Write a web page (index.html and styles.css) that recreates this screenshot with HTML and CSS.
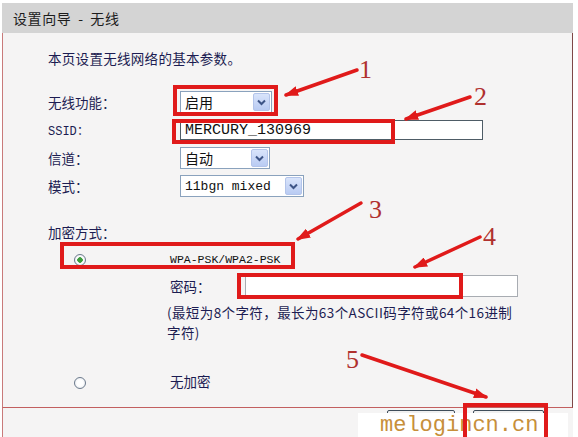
FILE: index.html
```html
<!DOCTYPE html>
<html lang="zh-CN">
<head>
    <meta charset="UTF-8">
    <title>设置向导 - 无线</title>
    <link rel="stylesheet" href="styles.css">
</head>
<body>
    <div class="wizard">
        <div class="wizard-head">设置向导 - 无线</div>

        <div class="wizard-body">
            <p class="intro">本页设置无线网络的基本参数。</p>

            <!-- BASIC SETTINGS -->
            <div class="form-grid">
                <label>无线功能：</label>
                <div class="select sel-switch"><span>启用</span><span class="arrow"><svg width="9" height="7" viewBox="0 0 9 7"><path d="M1 1.5 L4.5 5 L8 1.5" fill="none" stroke="#3d5486" stroke-width="2"/></svg></span></div>

                <label class="mono">SSID：</label>
                <input type="text" class="ssid" value="MERCURY_130969">

                <label>信道：</label>
                <div class="select sel-channel"><span>自动</span><span class="arrow"><svg width="9" height="7" viewBox="0 0 9 7"><path d="M1 1.5 L4.5 5 L8 1.5" fill="none" stroke="#3d5486" stroke-width="2"/></svg></span></div>

                <label>模式：</label>
                <div class="select sel-mode"><span class="mono-val">11bgn mixed</span><span class="arrow"><svg width="9" height="7" viewBox="0 0 9 7"><path d="M1 1.5 L4.5 5 L8 1.5" fill="none" stroke="#3d5486" stroke-width="2"/></svg></span></div>
            </div>

            <!-- ENCRYPTION -->
            <div class="enc-title">加密方式：</div>

            <div class="enc-option">
                <span class="radio-cell"><span class="radio checked"></span></span>
                <span class="enc-name">WPA-PSK/WPA2-PSK</span>
            </div>

            <div class="pwd-row">
                <span class="pwd-label">密码：</span>
                <input type="text" class="pwd">
            </div>
            <p class="note">(最短为8个字符，最长为63个ASCII码字符或64个16进制<br>字符)</p>

            <div class="enc-option enc-none">
                <span class="radio-cell"><span class="radio"></span></span>
                <span>无加密</span>
            </div>
        </div>

        <!-- buttons sit under the watermark, their captions are hidden -->
        <div class="wizard-foot">
            <button type="button" class="btn-prev" aria-label="上一步"></button>
            <button type="button" class="btn-next" aria-label="下一步"></button>
        </div>
    </div>

    <div class="watermark">melogincn.cn</div>

    <!-- annotation marks drawn over the screenshot -->
    <svg class="marks" width="578" height="437" viewBox="0 0 578 437">
        <defs>
            <marker id="head" viewBox="0 0 14 10" refX="12" refY="5" markerWidth="14" markerHeight="10" markerUnits="userSpaceOnUse" orient="auto">
                <path d="M0 0 L14 5 L0 10 Z" fill="#e01a1a"/>
            </marker>
        </defs>
        <g fill="none" stroke="#e01a1a" stroke-width="4">
            <rect x="175" y="87" width="101" height="27"/>
            <rect x="174" y="121" width="219" height="21"/>
            <rect x="62" y="244" width="231" height="23"/>
            <rect x="239" y="275" width="222" height="22"/>
            <rect x="465" y="405" width="81" height="40"/>
        </g>
        <g stroke="#e01a1a" stroke-width="3.5" stroke-linecap="round" marker-end="url(#head)">
            <line x1="357" y1="70" x2="286" y2="95"/>
            <line x1="470" y1="97" x2="406" y2="119"/>
            <line x1="361" y1="203" x2="298" y2="239"/>
            <line x1="480" y1="237" x2="415" y2="267"/>
            <line x1="362" y1="355" x2="486" y2="397"/>
        </g>
        <g class="num">
            <text x="359" y="78">1</text>
            <text x="474" y="105">2</text>
            <text x="369" y="218">3</text>
            <text x="483" y="245">4</text>
            <text x="346" y="368">5</text>
        </g>
    </svg>
</body>
</html>
```

FILE: styles.css
```css
* {
    box-sizing: border-box;
}

body {
    margin: 0;
    position: relative;
    width: 578px;
    height: 437px;
    overflow: hidden;
    background: #ffffff;
    font-family: "Noto Sans CJK SC", sans-serif;
    color: #1c1c52;
}

.wizard {
    margin: 3px 0 0 2px;
    width: 571px;
}

.wizard-head {
    height: 30px;
    line-height: 30px;
    padding-left: 11px;
    background: #d4d4d4;
    font-size: 14px;
    letter-spacing: 0.6px;
    word-spacing: 3px;
    color: #1c1c1c;
}

.wizard-body {
    height: 375px;
    padding: 15px 0 0 45px;
    background: #f5f4f4;
    border-left: 1px solid #c97a7a;
    border-right: 1px solid #7e4848;
    border-bottom: 1px solid #c25f5f;
}

.intro {
    margin: 0;
    font-size: 13.5px;
    letter-spacing: 0.3px;
    line-height: 20px;
}

.form-grid {
    display: grid;
    grid-template-columns: 132px auto;
    grid-auto-rows: 28px;
    align-items: center;
    justify-items: start;
    margin-top: 20px;
    font-size: 13.5px;
}

.form-grid label.mono {
    font-family: "Liberation Mono", monospace;
    font-size: 12px;
}

.select {
    display: flex;
    align-items: center;
    justify-content: space-between;
    height: 22px;
    padding: 0 1px 0 4px;
    background: #ffffff;
    border: 1px solid #8aa2bd;
    font-size: 14px;
    color: #111;
}

.sel-switch { width: 92px; }
.sel-channel { width: 90px; }
.sel-mode { width: 124px; }

.mono-val {
    font-family: "Liberation Mono", monospace;
    font-size: 13px;
}

.arrow {
    display: flex;
    align-items: center;
    justify-content: center;
    width: 17px;
    height: 18px;
    background: linear-gradient(#d9e4fb, #b9cbf3);
    border: 1px solid #b3c4ea;
    border-radius: 2px;
}

input[type="text"] {
    height: 20px;
    padding: 0 4px;
    background: #ffffff;
    outline: none;
    color: #111;
}

.ssid {
    width: 303px;
    border: 1px solid #4e5c66;
    font-family: "Liberation Mono", monospace;
    font-size: 15px;
}

.enc-title {
    margin-top: 22px;
    font-size: 13.5px;
    line-height: 20px;
}

.enc-option {
    display: flex;
    align-items: center;
    height: 22px;
    margin-top: 6px;
    font-size: 13.5px;
}

.radio-cell {
    width: 122px;
    padding-left: 26px;
}

.radio {
    display: block;
    width: 12px;
    height: 12px;
    border-radius: 50%;
    border: 1px solid #6c7a8c;
    background: radial-gradient(circle, #ffffff 40%, #dfe3ea);
}

.radio.checked {
    background: radial-gradient(circle, #3c9c3c 0 2.5px, #ffffff 3px, #dfe3ea);
    margin-top: 2px;
}

.enc-name {
    font-family: "Liberation Mono", monospace;
    font-size: 11.5px;
    color: #111;
}

.pwd-row {
    display: flex;
    align-items: center;
    height: 22px;
    margin-top: 5px;
    padding-left: 122px;
    font-size: 13.5px;
}

.pwd-label {
    width: 75px;
}

.pwd {
    width: 273px;
    height: 22px !important;
    border: 1px solid #a8acb2;
}

.note {
    margin: 5px 0 0 119px;
    font-size: 13.5px;
    letter-spacing: 0.4px;
    line-height: 20px;
    white-space: nowrap;
}

.enc-none {
    margin-top: 28px;
}

.enc-none .radio {
    margin-top: 4px;
}

.wizard-foot {
    display: flex;
    gap: 18px;
    height: 29px;
    padding: 2px 0 0 384px;
    background: #f5f4f4;
    border-left: 1px solid #c97a7a;
}

.wizard-foot button {
    height: 24px;
    padding: 0;
    background: #f0f0f0;
    border: 1px solid #3f4d5a;
    border-radius: 2px;
}

.btn-prev { width: 68px; }
.btn-next { width: 71px; }

.watermark {
    position: absolute;
    left: 358px;
    top: 413px;
    width: 210px;
    height: 26px;
    padding-left: 22px;
    background: #ffffff;
    font-family: "Liberation Mono", monospace;
    font-size: 22px;
    line-height: 25px;
    color: #c78f3a;
}

.marks {
    position: absolute;
    left: 0;
    top: 0;
    pointer-events: none;
}

.num text {
    font-family: "Liberation Serif", serif;
    font-size: 26px;
    fill: #b0302e;
}
```
